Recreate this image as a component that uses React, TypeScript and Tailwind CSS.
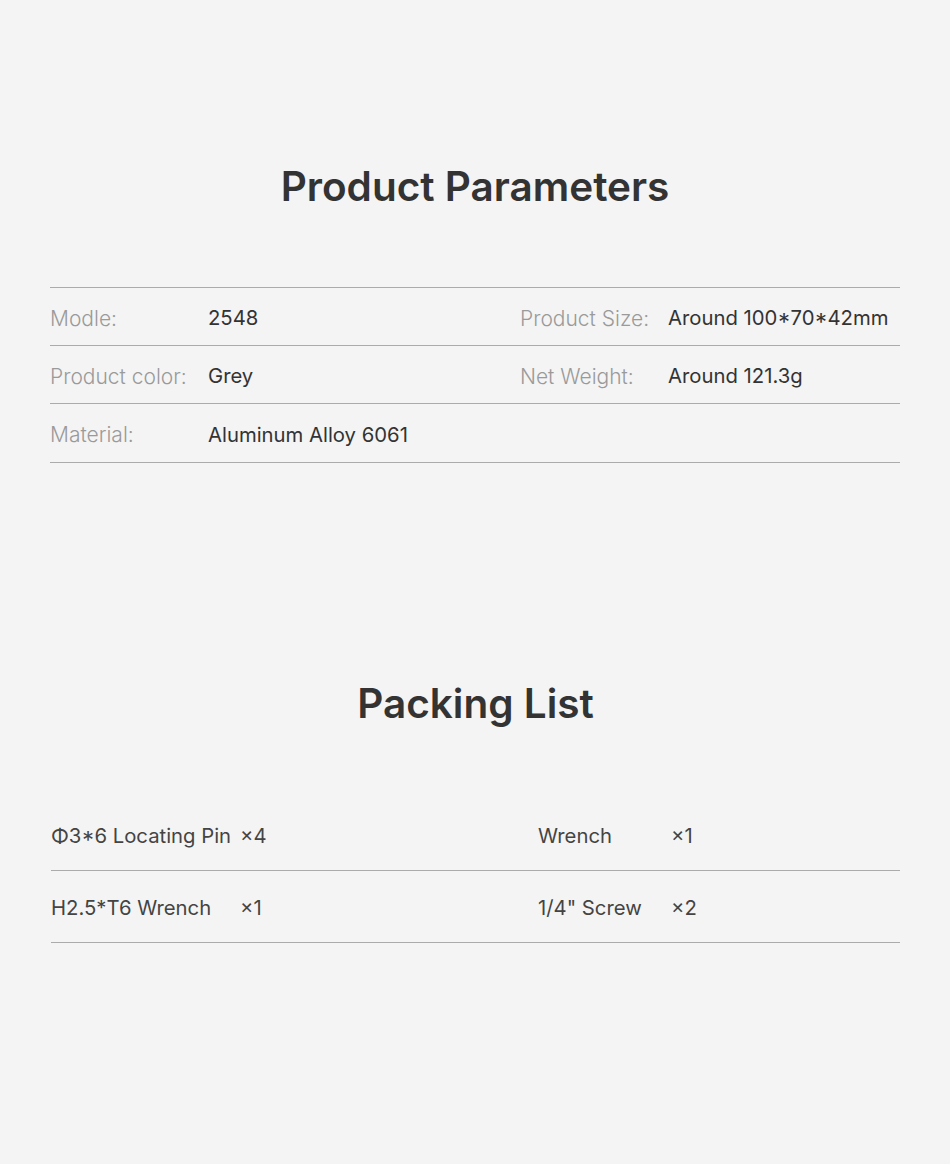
const params = [
  [
    { label: "Modle:", value: "2548" },
    { label: "Product Size:", value: "Around 100*70*42mm" },
  ],
  [
    { label: "Product color:", value: "Grey" },
    { label: "Net Weight:", value: "Around 121.3g" },
  ],
  [{ label: "Material:", value: "Aluminum Alloy 6061" }, null],
];

const packing = [
  [
    { name: "Φ3*6 Locating Pin", qty: "×4" },
    { name: "Wrench", qty: "×1" },
  ],
  [
    { name: "H2.5*T6 Wrench", qty: "×1" },
    { name: "1/4\" Screw", qty: "×2" },
  ],
];

export default function App() {
  return (
    <div
      className="min-h-[1164px] w-full bg-[#f4f4f4] text-[#333333]"
      style={{ fontFamily: "Inter, 'Noto Sans', sans-serif" }}
    >
      <section className="px-[50px] pt-[160px]">
        <h1 className="h-[54px] text-center text-[40.5px] font-semibold leading-[54px] text-[#333333]">
          Product Parameters
        </h1>
        <div className="mt-[73px] border-t border-[#ababab]">
          {params.map((row, i) => (
            <div
              key={i}
              className="flex h-[58px] items-center whitespace-nowrap border-b border-[#ababab] pt-[4px] text-[20.3px] last:h-[59px]"
            >
              <div className="w-[158px] text-[21px] font-light text-[#9a9a9a]">{row[0]?.label}</div>
              <div className="w-[312px] text-[#333333]">{row[0]?.value}</div>
              <div className="w-[148px] text-[21px] font-light text-[#9a9a9a]">{row[1]?.label}</div>
              <div className="flex-1 text-[#333333]">{row[1]?.value}</div>
            </div>
          ))}
        </div>
      </section>

      <section className="pl-[51px] pr-[50px] pt-[214px]">
        <h1 className="h-[54px] text-center text-[40.5px] font-semibold leading-[54px] text-[#333333]">
          Packing List
        </h1>
        <div className="mt-[69px]">
          {packing.map((row, i) => (
            <div
              key={i}
              className="flex h-[72px] items-center whitespace-nowrap border-b border-[#ababab] pt-[4px] text-[20.3px] text-[#444444] first:h-[71px] first:pt-[3px]"
            >
              <div className="w-[189px]">{row[0].name}</div>
              <div className="w-[298px]">{row[0].qty}</div>
              <div className="w-[133px]">{row[1].name}</div>
              <div className="flex-1">{row[1].qty}</div>
            </div>
          ))}
        </div>
      </section>
    </div>
  );
}
